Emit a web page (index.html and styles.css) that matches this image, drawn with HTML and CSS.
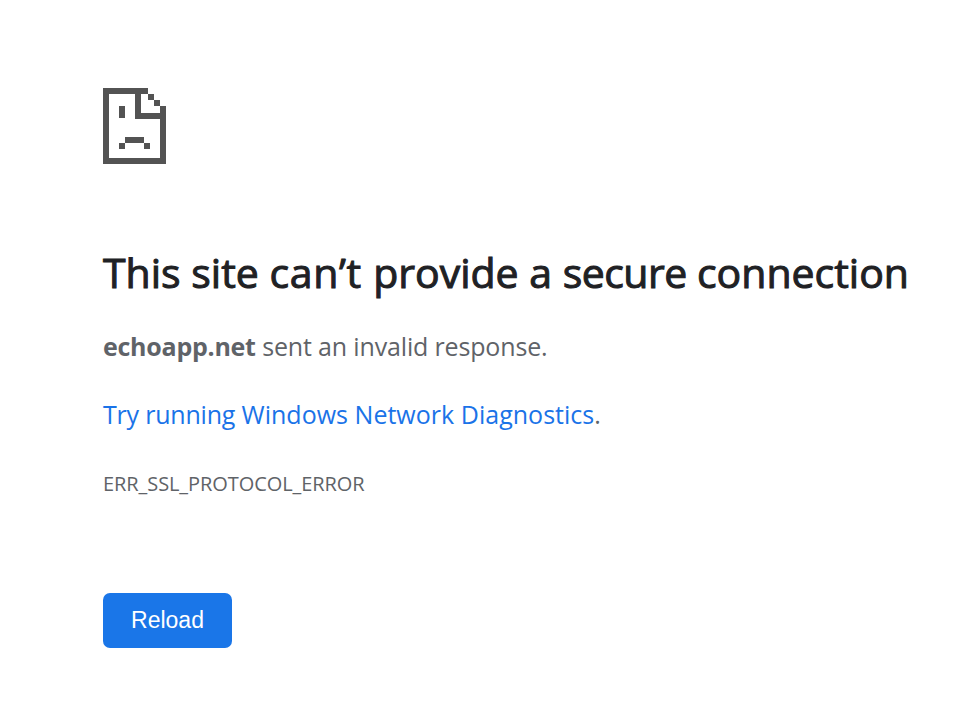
FILE: index.html
```html
<!DOCTYPE html>
<html lang="en">
<head>
<meta charset="utf-8">
<title>echoapp.net</title>
<link rel="stylesheet" href="styles.css">
</head>
<body>
<main class="error-page">
  <svg class="icon" viewBox="0 0 63 76" shape-rendering="crispEdges" aria-hidden="true">
    <path fill="#535353" fill-rule="evenodd" d="M0 0H45V6H51V12H57V18H63V76H0ZM6 6V70H57V31H32V6ZM38 6V25H57V18H51V12H45V6ZM16 18H22V30H16ZM22 49H41V55H22ZM16 55H22V61H16ZM41 55H47V61H41Z"/>
  </svg>
  <h1 class="title">This site <span class="loose">can’t </span>provide a <span class="tight">secure </span>connection</h1>
  <p class="summary"><strong class="host">echoapp.net</strong> <span class="message">sent an invalid response.</span></p>
  <p class="suggestion"><a class="link" href="#"><span class="link-start">Try running </span>Windows Network Diagnostics</a>.</p>
  <p class="code">ERR_SSL_PROTOCOL_ERROR</p>
  <button class="reload" type="button">Reload</button>
</main>
</body>
</html>
```
FILE: styles.css
```css
body {
  margin: 0;
  background: #fff;
  color: #5f6368;
  font-family: "Open Sans", "Noto Sans", sans-serif;
}
.error-page {
  display: flex;
  flex-direction: column;
  align-items: flex-start;
  padding: 88px 0 0 103px;
  white-space: nowrap;
}
.icon { width: 63px; height: 76px; }
.title {
  margin: 79px 0 0;
  color: #202124;
  font-size: 41px;
  font-weight: 400;
  line-height: 58px;
  -webkit-text-stroke: 1px #202124;
}
.loose { letter-spacing: 0.65px; }
.tight { letter-spacing: -0.5px; }
.summary, .suggestion {
  font-size: 25px;
  line-height: 42px;
}
.summary { margin: 24px 0 0; }
.suggestion { margin: 26px 0 0; letter-spacing: 0.02px; }
.host { letter-spacing: -0.25px; }
.message { letter-spacing: -0.16px; }
.link { color: #1a73e8; text-decoration: none; }
.link-start { letter-spacing: -0.2px; }
.code {
  margin: 32px 0 0;
  font-size: 20px;
  line-height: 34px;
  letter-spacing: -0.08px;
}
.reload {
  width: 129px;
  height: 55px;
  margin: 92px 0 0;
  padding: 0;
  border: 0;
  border-radius: 7px;
  background: #1a76e8;
  color: #fff;
  font: 23px "Liberation Sans", sans-serif;
}
```
